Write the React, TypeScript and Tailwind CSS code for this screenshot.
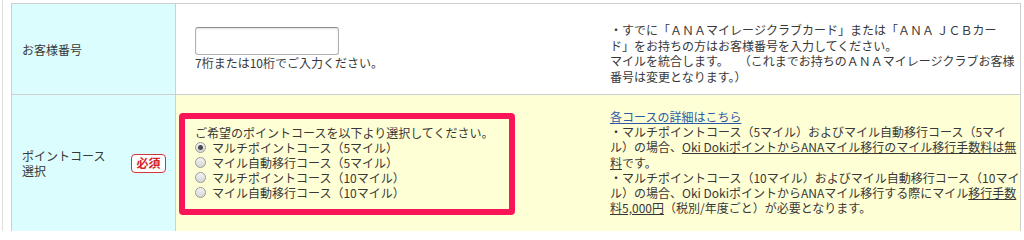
import React from "react";

function Radio({ checked }: { checked?: boolean }) {
  return (
    <span className="relative inline-flex items-center justify-center w-[11px] h-[11px] rounded-full border border-[#9a9a9a] bg-gradient-to-b from-[#f4f4f4] to-[#d6d6d6] mr-[6px] shrink-0">
      {checked && <span className="w-[5px] h-[5px] rounded-full bg-[#4a4a4a]" />}
    </span>
  );
}

export default function App() {
  const courses = [
    "マルチポイントコース（5マイル）",
    "マイル自動移行コース（5マイル）",
    "マルチポイントコース（10マイル）",
    "マイル自動移行コース（10マイル）",
  ];
  return (
    <div className="w-[1024px] h-[231px] bg-white overflow-hidden font-['Noto_Sans_CJK_JP',sans-serif] text-[12px] text-[#383838]">
      <div className="ml-[2px] h-full border-l border-[#dedede] pl-[8px] pt-[3px]">
        <div className="w-[1010px] border border-[#cfcfcf]">
          {/* Row 1 */}
          <div className="flex h-[91px] border-b border-[#cfcfcf]">
            <div className="w-[164px] shrink-0 bg-[#dcfdfe] border-r border-[#cfcfcf] flex items-center pl-[10px] leading-[15px]">
              お客様番号
            </div>
            <div className="w-[420px] shrink-0 bg-white pl-[19px] pt-[23px]">
              <div className="w-[144px] h-[28px] border border-[#b0b0b0] border-t-[#8f8f8f] rounded-[3px] bg-white shadow-[inset_0_1px_2px_rgba(0,0,0,0.12)]" />
              <div className="leading-[15px] whitespace-nowrap">7桁または10桁でご入力ください。</div>
            </div>
            <div className="flex-1 bg-white pl-[14px] pt-[18px] leading-[15.5px] whitespace-nowrap">
              ・すでに「ＡＮＡマイレージクラブカード」または「ＡＮＡ ＪＣＢカー
              <br />
              ド」をお持ちの方はお客様番号を入力してください。
              <br />
              マイルを統合します。<span className="inline-block w-[10px]" />（これまでお持ちのＡＮＡマイレージクラブお客様
              <br />
              番号は変更となります。）
            </div>
          </div>
          {/* Row 2 */}
          <div className="flex h-[136px]">
            <div className="w-[164px] shrink-0 bg-[#dcfdfe] border-r border-[#cfcfcf] flex items-center justify-between pl-[10px] pr-[9px]">
              <div className="leading-[15px]">
                ポイントコース
                <br />
                選択
              </div>
              <span className="flex items-center justify-center w-[35px] h-[19px] bg-white border border-[#d0363a] rounded-[4px] text-[#d0262a] font-bold text-[12px] leading-none">
                必須
              </span>
            </div>
            <div className="w-[420px] shrink-0 bg-[#ffffd6] pl-[3px] pt-[18px]">
              <div className="w-[336px] h-[102px] border-[6px] border-[#fa1559] rounded-[4px] pl-[10px] pt-[6px] leading-[15px]">
                <div className="whitespace-nowrap">ご希望のポイントコースを以下より選択してください。</div>
                {courses.map((c, i) => (
                  <div key={c} className="flex items-center whitespace-nowrap">
                    <Radio checked={i === 0} />
                    <span>{c}</span>
                  </div>
                ))}
              </div>
            </div>
            <div className="flex-1 bg-[#ffffd6] pl-[14px] pt-[14px] leading-[15.2px] whitespace-nowrap">
              <span className="text-[#2b5ba8] underline">各コースの詳細はこちら</span>
              <br />
              ・マルチポイントコース（5マイル）およびマイル自動移行コース（5マイ
              <br />
              ル）の場合、<span className="underline">Oki DokiポイントからANAマイル移行のマイル移行手数料は無</span>
              <br />
              <span className="underline">料</span>です。
              <br />
              ・マルチポイントコース（10マイル）およびマイル自動移行コース（10マイ
              <br />
              ル）の場合、Oki DokiポイントからANAマイル移行する際にマイル<span className="underline">移行手数</span>
              <br />
              <span className="underline">料5,000円</span>（税別/年度ごと）が必要となります。
            </div>
          </div>
        </div>
      </div>
    </div>
  );
}
